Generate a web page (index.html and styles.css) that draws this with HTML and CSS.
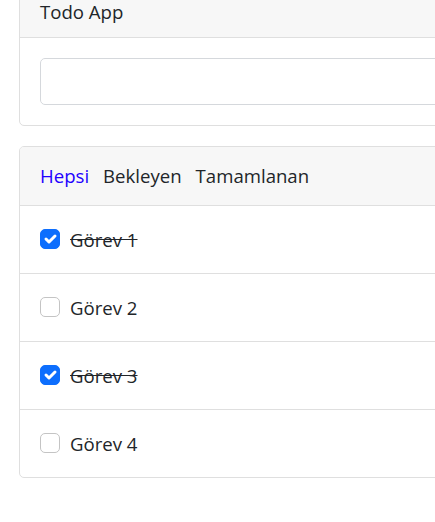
FILE: index.html
```html
<!DOCTYPE html>
<html lang="tr">
<head>
<meta charset="utf-8">
<title>Todo App</title>
<link rel="stylesheet" href="styles.css">
</head>
<body>
<div class="page">
  <div class="card">
    <div class="card-header">Todo App</div>
    <div class="card-body">
      <input class="form-control" type="text">
    </div>
  </div>

  <div class="card card-list">
    <div class="card-header filters">
      <a class="filter active">Hepsi</a>
      <a class="filter">Bekleyen</a>
      <a class="filter">Tamamlanan</a>
    </div>
    <ul class="list">
      <li class="item done">
        <span class="check checked"><svg viewBox="0 0 20 20"><path d="m6 10 3 3 6-6"/></svg></span>
        <span class="label">Görev 1</span>
      </li>
      <li class="item">
        <span class="check"></span>
        <span class="label">Görev 2</span>
      </li>
      <li class="item done">
        <span class="check checked"><svg viewBox="0 0 20 20"><path d="m6 10 3 3 6-6"/></svg></span>
        <span class="label">Görev 3</span>
      </li>
      <li class="item">
        <span class="check"></span>
        <span class="label">Görev 4</span>
      </li>
    </ul>
  </div>
</div>
</body>
</html>
```

FILE: styles.css
```css
html, body {
  margin: 0;
  padding: 0;
  background: #fff;
  overflow: hidden;
}

body {
  font-family: "Open Sans", "Noto Sans", sans-serif;
  font-size: 18.6px;
  color: #212529;
}

.page {
  margin-top: -14px;
  padding-left: 19px;
  width: 720px;
}

.card {
  border: 1px solid #dfdfdf;
  border-radius: 5px;
  background: #fff;
  overflow: hidden;
}

.card + .card {
  margin-top: 20px;
}

.card-header {
  background: #f7f7f7;
  border-bottom: 1px solid #dfdfdf;
  padding: 10px 20px;
  line-height: 30px;
  height: 30px;
}

.card-body {
  padding: 20px;
}

.form-control {
  display: block;
  box-sizing: border-box;
  width: 100%;
  height: 47px;
  border: 1px solid #d5d8dc;
  border-radius: 5px;
  margin: 0;
  padding: 0 15px;
  font: inherit;
}

.filters {
  display: flex;
  gap: 14px;
  height: 58px;
  padding-top: 0;
  padding-bottom: 0;
  align-items: center;
}

.filter {
  color: #212529;
  cursor: pointer;
}

.filter.active {
  color: #2200ff;
}

.list {
  list-style: none;
  margin: 0;
  padding: 0;
}

.item {
  display: flex;
  align-items: center;
  height: 67px;
  padding: 0 20px;
  border-bottom: 1px solid #dfdfdf;
}

.item:last-child {
  border-bottom: none;
}

.check {
  box-sizing: border-box;
  width: 20px;
  height: 20px;
  flex: none;
  border: 1px solid #c4c4c4;
  border-radius: 5px;
  background: #fff;
  margin: -2px 10px 0 0;
  display: flex;
}

.check.checked {
  background: #0d6efd;
  border-color: #0d6efd;
}

.check svg {
  width: 20px;
  height: 20px;
  margin: -1px;
}

.check svg path {
  fill: none;
  stroke: #fff;
  stroke-width: 3;
  stroke-linecap: round;
  stroke-linejoin: round;
}

.label {
  line-height: 30px;
}

.item.done .label {
  text-decoration: line-through;
}
```
